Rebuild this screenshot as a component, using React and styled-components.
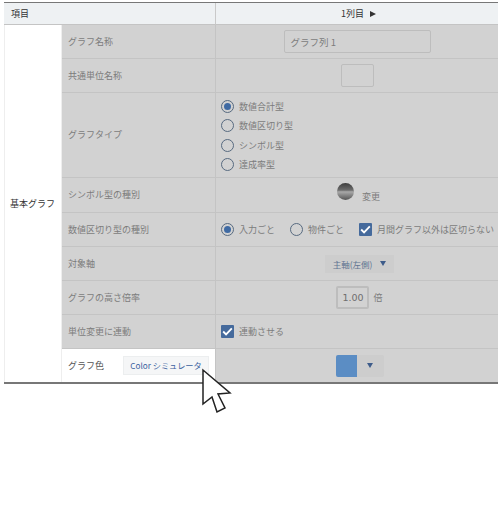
import styled, { createGlobalStyle } from 'styled-components';

const GlobalStyle = createGlobalStyle`
  html, body {
    margin: 0;
    padding: 0;
    background: #fff;
    font-family: "Noto Sans CJK JP", "Liberation Sans", sans-serif;
  }
`;

const Page = styled.div`
  position: relative;
  width: 500px;
  height: 517px;
  padding: 2px 2px 0 4px;
  box-sizing: border-box;
  overflow: hidden;
`;

const Table = styled.div`
  display: grid;
  grid-template-columns: 58px 153px 1fr;
  grid-template-rows: 22px 34px 34px 85px 35px 34px 34px 34px 34px 33px;
  border-top: 1px solid #777;
  border-bottom: 2px solid #777;
  width: 494px;
  font-size: 9px;
  color: #7c7c7c;
`;

const HeadCell = styled.div`
  grid-column: ${({ $span }) => $span || 'auto'};
  background: #eef1f3;
  border-left: ${({ $divided }) => ($divided ? '1px solid #c9c9c9' : 'none')};
  border-bottom: 1px solid #c4c4c4;
  display: flex;
  align-items: center;
  justify-content: ${({ $center }) => ($center ? 'center' : 'flex-start')};
  gap: 6px;
  padding-left: ${({ $center }) => ($center ? '3px' : '7px')};
  color: #333;
`;

const GroupCell = styled.div`
  grid-row: 2 / span 9;
  background: #fff;
  border-right: 1px solid #eee;
  border-left: 1px solid #eee;
  display: flex;
  align-items: center;
  padding-left: 5px;
  color: #333;
`;

const LabelCell = styled.div`
  background: ${({ $light }) => ($light ? '#fff' : '#d2d2d2')};
  color: ${({ $light }) => ($light ? '#555' : '#7c7c7c')};
  border-bottom: ${({ $last }) => ($last ? 'none' : '1px solid #c4c4c4')};
  display: flex;
  align-items: center;
  justify-content: space-between;
  padding: 0 6px 1px 6px;
`;

const ValueCell = styled.div`
  background: #d2d2d2;
  border-left: 1px solid #c4c4c4;
  border-bottom: ${({ $last }) => ($last ? 'none' : '1px solid #c4c4c4')};
  display: flex;
  align-items: center;
  justify-content: ${({ $start }) => ($start ? 'flex-start' : 'center')};
  padding-left: ${({ $start }) => ($start ? '5px' : '0')};
  box-sizing: border-box;
  min-width: 0;
`;

const TextInput = styled.div`
  width: 147px;
  height: 23px;
  box-sizing: border-box;
  border: 1px solid #bdbdbd;
  border-radius: 2px;
  display: flex;
  align-items: center;
  padding-left: 6px;
  font-size: 9.5px;
  color: #7c7c7c;
`;

const SmallInput = styled.div`
  width: ${({ $w }) => $w || 33}px;
  height: 23px;
  box-sizing: border-box;
  border: ${({ $thick }) => ($thick ? 2 : 1)}px solid #bdbdbd;
  border-radius: 2px;
  display: flex;
  align-items: center;
  justify-content: center;
  font-family: "DejaVu Sans", "Liberation Sans", sans-serif;
  font-size: 9.5px;
  color: #6f6f6f;
`;

const RadioStack = styled.div`
  display: flex;
  flex-direction: column;
  gap: 3.5px;
  padding-top: 1px;
`;

const OptionRow = styled.div`
  display: flex;
  align-items: center;
  gap: 15px;
`;

const Option = styled.label`
  display: flex;
  align-items: center;
  gap: 5px;
  height: 16px;
  white-space: nowrap;
`;

const Radio = styled.span`
  width: 13px;
  height: 13px;
  box-sizing: border-box;
  border: 1.5px solid #576a80;
  border-radius: 50%;
  display: flex;
  align-items: center;
  justify-content: center;
  &::after {
    content: '';
    display: ${({ $on }) => ($on ? 'block' : 'none')};
    width: 7px;
    height: 7px;
    border-radius: 50%;
    background: #3f6aa3;
  }
`;

const CheckBox = styled.span`
  width: 13px;
  height: 13px;
  border-radius: 1px;
  background: #456a9c;
  display: flex;
  align-items: center;
  justify-content: center;
`;

const Orb = styled.span`
  width: 17px;
  height: 17px;
  margin-top: -8px;
  border-radius: 50%;
  background: linear-gradient(#3d3d3d 0%, #6d6d6d 42%, #a9a9a9 52%, #555 100%);
`;

const SymbolRow = styled.div`
  display: flex;
  align-items: center;
  gap: 8px;
  margin-left: 3px;
`;

const SymbolText = styled.span`
  margin-top: 2px;
`;

const Select = styled.div`
  width: 69px;
  height: 18px;
  margin-left: 5px;
  background: #cdcdcd;
  display: flex;
  align-items: center;
  justify-content: center;
  gap: 8px;
  font-size: 8.5px;
  color: #5f7492;
`;

const Caret = styled.span`
  width: 0;
  height: 0;
  border-left: 3.5px solid transparent;
  border-right: 3.5px solid transparent;
  border-top: 5px solid #3e5c8a;
`;

const HeadArrow = styled.span`
  width: 0;
  height: 0;
  border-top: 3.5px solid transparent;
  border-bottom: 3.5px solid transparent;
  border-left: 6px solid #333;
`;

const ScaleRow = styled.div`
  display: flex;
  align-items: center;
  gap: 4px;
  margin-left: 5px;
`;

const ColorPicker = styled.div`
  width: 48px;
  height: 22px;
  margin-left: 5px;
  background: #cdcdcd;
  display: flex;
  align-items: center;
  border-radius: 2px;
`;

const Swatch = styled.span`
  width: 21px;
  height: 22px;
  background: #5b8dc4;
  border-radius: 2px 0 0 2px;
`;

const PickerCaret = styled.span`
  flex: 1;
  display: flex;
  justify-content: center;
`;

const SimButton = styled.div`
  width: 86px;
  height: 19px;
  box-sizing: border-box;
  background: #f5f6f7;
  border: 1px solid #eceeef;
  display: flex;
  align-items: center;
  justify-content: center;
  color: #3c62a0;
  font-size: 8.2px;
  white-space: nowrap;
`;

const Cursor = styled.svg`
  position: absolute;
  left: 201px;
  top: 368px;
`;

const Check = () => (
  <svg width="11" height="9" viewBox="0 0 12 10">
    <path d="M1.2 5 L4.4 8.2 L10.8 1.4" fill="none" stroke="#fff" strokeWidth="2" />
  </svg>
);

const Row = ({ label, value }) => (
  <>
    <LabelCell>{label}</LabelCell>
    {value}
  </>
);

const rows = [
  ['グラフ名称', <ValueCell key="v"><TextInput>グラフ列 1</TextInput></ValueCell>],
  ['共通単位名称', <ValueCell key="v"><SmallInput /></ValueCell>],
  [
    'グラフタイプ',
    <ValueCell key="v" $start>
      <RadioStack>
        <Option><Radio $on />数値合計型</Option>
        <Option><Radio />数値区切り型</Option>
        <Option><Radio />シンボル型</Option>
        <Option><Radio />達成率型</Option>
      </RadioStack>
    </ValueCell>,
  ],
  [
    'シンボル型の種別',
    <ValueCell key="v">
      <SymbolRow><Orb /><SymbolText>変更</SymbolText></SymbolRow>
    </ValueCell>,
  ],
  [
    '数値区切り型の種別',
    <ValueCell key="v" $start>
      <OptionRow>
        <Option><Radio $on />入力ごと</Option>
        <Option><Radio />物件ごと</Option>
        <Option><CheckBox><Check /></CheckBox>月間グラフ以外は区切らない</Option>
      </OptionRow>
    </ValueCell>,
  ],
  ['対象軸', <ValueCell key="v"><Select>主軸(左側)<Caret /></Select></ValueCell>],
  [
    'グラフの高さ倍率',
    <ValueCell key="v">
      <ScaleRow><SmallInput $thick>1.00</SmallInput>倍</ScaleRow>
    </ValueCell>,
  ],
  [
    '単位変更に連動',
    <ValueCell key="v" $start>
      <Option><CheckBox><Check /></CheckBox>連動させる</Option>
    </ValueCell>,
  ],
];

const App = () => (
  <Page>
    <GlobalStyle />
    <Table>
      <HeadCell $span="span 2">項目</HeadCell>
      <HeadCell $center $divided>1列目 <HeadArrow /></HeadCell>
      <GroupCell>基本グラフ</GroupCell>
      {rows.map(([label, value]) => (
        <Row key={label} label={label} value={value} />
      ))}
      <LabelCell $light $last>
        グラフ色
        <SimButton>Color シミュレータ</SimButton>
      </LabelCell>
      <ValueCell $last>
        <ColorPicker>
          <Swatch />
          <PickerCaret><Caret /></PickerCaret>
        </ColorPicker>
      </ValueCell>
    </Table>
    <Cursor width="32" height="48" viewBox="0 0 32 48">
      <path
        d="M2 2 L2 36 L11 29 L16 44 L24 40 L17 26 L29 25 Z"
        fill="#fff"
        stroke="#222"
        strokeWidth="1.5"
      />
    </Cursor>
  </Page>
);

export default App;
